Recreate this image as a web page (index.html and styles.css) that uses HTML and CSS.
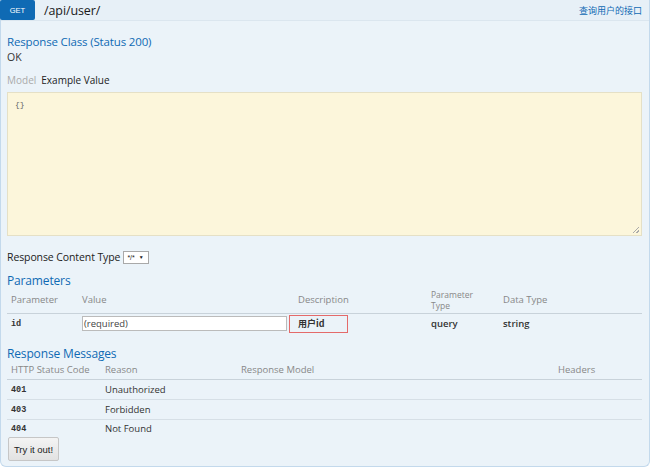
FILE: index.html
```html
<!DOCTYPE html>
<html>
<head>
<meta charset="utf-8">
<link rel="stylesheet" href="styles.css">
</head>
<body>
<div class="op">
  <div class="heading">
    <span class="verb">GET</span>
    <span class="path">/api/user/</span>
    <span class="summary">查询用户的接口</span>
  </div>
  <div class="content">
    <h4 class="title t-first">Response Class (Status 200)</h4>
    <div class="ok">OK</div>
    <div class="tabs"><span class="tab-off">Model</span><span class="tab-on">Example Value</span></div>
    <div class="sample"><span class="code">{}</span><span class="grip"></span></div>
    <div class="ctype"><span>Response Content Type</span><span class="select">*/* <span class="arrow">▼</span></span></div>
    <h4 class="title t-params">Parameters</h4>
    <table class="params">
      <thead>
        <tr>
          <th class="c-name">Parameter</th>
          <th class="c-value">Value</th>
          <th class="c-desc">Description</th>
          <th class="c-ptype"><span class="ptl">Parameter</span><span class="ptl">Type</span></th>
          <th class="c-dtype">Data Type</th>
        </tr>
      </thead>
      <tbody>
        <tr>
          <td class="mono">id</td>
          <td><span class="input">(required)</span></td>
          <td><span class="desc-box">用户id</span></td>
          <td class="strong">query</td>
          <td class="strong">string</td>
        </tr>
      </tbody>
    </table>
    <h4 class="title t-resp">Response Messages</h4>
    <table class="resp">
      <thead>
        <tr>
          <th class="r-code">HTTP Status Code</th>
          <th class="r-reason">Reason</th>
          <th class="r-model">Response Model</th>
          <th class="r-headers">Headers</th>
        </tr>
      </thead>
      <tbody>
        <tr><td class="mono">401</td><td>Unauthorized</td><td></td><td></td></tr>
        <tr><td class="mono">403</td><td>Forbidden</td><td></td><td></td></tr>
        <tr class="last"><td class="mono">404</td><td>Not Found</td><td></td><td></td></tr>
      </tbody>
    </table>
    <div class="btn-row"><span class="btn">Try it out!</span></div>
  </div>
</div>
</body>
</html>
```
FILE: styles.css
```css
* { box-sizing: border-box; }
html, body { margin: 0; padding: 0; background: #ffffff; }
body {
  width: 650px;
  height: 468px;
  font-family: "Open Sans", "Noto Sans CJK SC", sans-serif;
  color: #333333;
  overflow: hidden;
}
.op {
  width: 650px;
  height: 467px;
  background: #ebf3f9;
  border: 1px solid #c3d9ec;
  border-top: none;
  border-radius: 0 0 6px 6px;
}
.heading {
  height: 21px;
  display: flex;
  align-items: center;
  background: #e7f0f7;
  border-bottom: 1px solid #dbe6ef;
}
.verb {
  width: 35px;
  height: 20px;
  margin-left: -1px;
  background: #0f6ab4;
  color: #ffffff;
  font-family: "Liberation Sans", sans-serif;
  font-size: 7.5px;
  display: flex;
  align-items: center;
  justify-content: center;
  border-radius: 2px;
}
.path {
  margin-left: 9px;
  font-size: 12.5px;
  color: #1a1a1a;
  letter-spacing: -0.1px;
}
.summary {
  margin-left: auto;
  margin-right: 7px;
  font-size: 9px;
  color: #0f6ab4;
  font-family: "Noto Sans CJK SC", sans-serif;
}
.content { padding: 0 7px 0 6px; }
.title {
  margin: 0;
  font-weight: normal;
  color: #0f6ab4;
  font-size: 11.5px;
  line-height: 15px;
  letter-spacing: -0.15px;
}
.t-first { margin-top: 13px; }
.ok { margin-top: 1px; font-size: 10.5px; line-height: 15px; color: #333; }
.tabs { margin-top: 8px; font-size: 10px; line-height: 15px; }
.tab-off { color: #aaaaaa; margin-right: 5px; }
.tab-on { color: #222222; }
.sample {
  position: relative;
  margin-top: 4px;
  height: 144px;
  width: 635px;
  background: #fcf6db;
  border: 1px solid #e5e0c6;
}
.code {
  position: absolute;
  left: 7px;
  top: 7px;
  font-family: "Liberation Mono", monospace;
  font-size: 8px;
  color: #666;
}
.grip {
  position: absolute;
  right: 2px;
  bottom: 2px;
  width: 6px;
  height: 6px;
  background: linear-gradient(135deg, transparent 45%, #aaa 45%, #aaa 55%, transparent 55%, transparent 75%, #aaa 75%, #aaa 85%, transparent 85%);
}
.ctype {
  margin-top: 14px;
  font-size: 10.5px;
  line-height: 15px;
  color: #222;
  display: flex;
  align-items: center;
  gap: 3px;
  letter-spacing: -0.1px;
}
.select {
  height: 13px;
  width: 26px;
  border: 1px solid #a9a9a9;
  background: #ffffff;
  font-size: 7px;
  font-family: "Liberation Sans", sans-serif;
  display: flex;
  align-items: center;
  padding-left: 3px;
  gap: 4px;
  letter-spacing: 0;
}
.arrow { font-size: 5px; color: #222; }
.t-params { margin-top: 8px; font-size: 12px; }
table { border-collapse: collapse; width: 635px; font-size: 9.5px; }
th {
  text-align: left;
  font-weight: normal;
  color: #888888;
  padding: 0 0 0 4px;
  border-bottom: 1px solid #c8d2da;
}
td { padding: 0 0 0 4px; color: #333; }
.params th { height: 25px; vertical-align: middle; line-height: 10px; }
.params th.c-ptype { font-size: 8.5px; }
.ptl { display: block; height: 11.5px; line-height: 11.5px; }
.c-name { width: 71px; }
.c-value { width: 216px; }
.c-desc { width: 133px; }
.c-ptype { width: 72px; }
.params td { height: 20px; }
.mono {
  font-family: "Liberation Mono", monospace;
  font-weight: bold;
  font-size: 8.5px;
  color: #333;
  padding-top: 1px;
}
.input {
  display: block;
  width: 205px;
  height: 15px;
  border: 1px solid #bbbbbb;
  background: #ffffff;
  font-size: 9.5px;
  line-height: 13px;
  padding-left: 1px;
  color: #444;
}
.desc-box {
  display: block;
  margin-left: -9px;
  margin-top: 1px;
  width: 59px;
  height: 18px;
  border: 1px solid #e46a6a;
  font-family: "Noto Sans CJK SC", sans-serif;
  font-weight: bold;
  font-size: 9px;
  line-height: 16px;
  padding-left: 8px;
  color: #333;
}
.strong { font-weight: 600; color: #333; }
.t-resp { margin-top: 13px; font-size: 12px; }
.resp th { height: 18px; vertical-align: middle; line-height: 12px; }
.r-code { width: 94px; }
.r-reason { width: 136px; }
.r-model { width: 317px; }
.resp td { height: 20px; border-bottom: 1px solid #d6dfe6; }
.resp tr.last td { border-bottom: none; height: 18px; }
.btn-row { display: flex; }
.btn {
  display: inline-flex;
  align-items: center;
  justify-content: center;
  width: 51px;
  height: 24px;
  margin-left: 1px;
  background: linear-gradient(#f4f4f4, #e2e2e2);
  border: 1px solid #c6c6c6;
  border-radius: 2px;
  font-family: "Liberation Sans", sans-serif;
  font-size: 9.5px;
  color: #222;
}
```
